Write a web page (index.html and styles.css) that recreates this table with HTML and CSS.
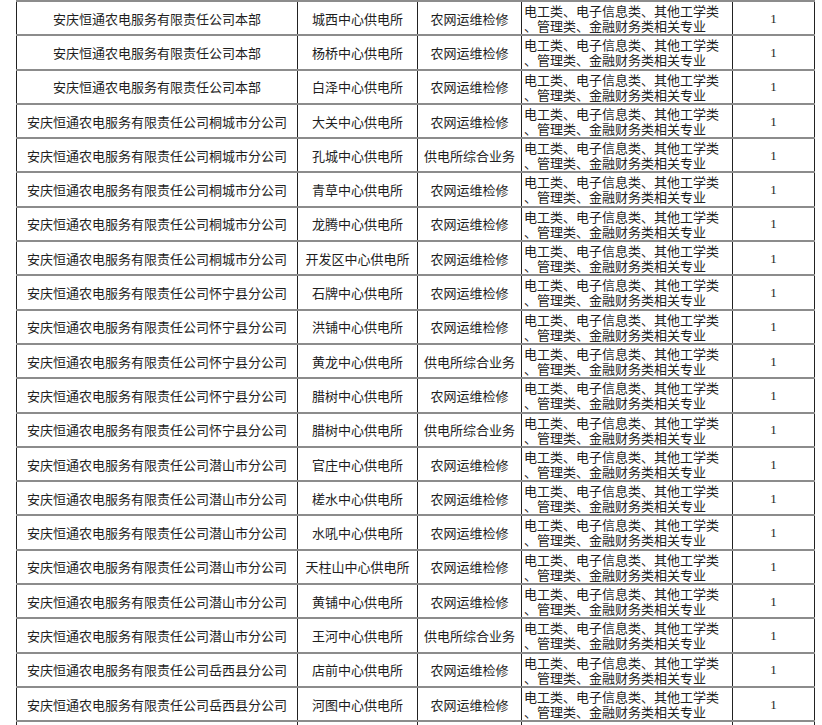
FILE: index.html
```html
<!DOCTYPE html>
<html lang="zh-CN">
<head>
<meta charset="utf-8">
<title>岗位表</title>
<link rel="stylesheet" href="styles.css">
</head>
<body>
<table class="grid">
<colgroup>
<col class="c1"><col class="c2"><col class="c3"><col class="c4"><col class="c5">
</colgroup>
<tbody>
<tr><td>安庆恒通农电服务有限责任公司本部</td><td>城西中心供电所</td><td>农网运维检修</td><td class="major">电工类、电子信息类、其他工学类<br>、管理类、金融财务类相关专业</td><td class="num">1</td></tr>
<tr><td>安庆恒通农电服务有限责任公司本部</td><td>杨桥中心供电所</td><td>农网运维检修</td><td class="major">电工类、电子信息类、其他工学类<br>、管理类、金融财务类相关专业</td><td class="num">1</td></tr>
<tr><td>安庆恒通农电服务有限责任公司本部</td><td>白泽中心供电所</td><td>农网运维检修</td><td class="major">电工类、电子信息类、其他工学类<br>、管理类、金融财务类相关专业</td><td class="num">1</td></tr>
<tr><td>安庆恒通农电服务有限责任公司桐城市分公司</td><td>大关中心供电所</td><td>农网运维检修</td><td class="major">电工类、电子信息类、其他工学类<br>、管理类、金融财务类相关专业</td><td class="num">1</td></tr>
<tr><td>安庆恒通农电服务有限责任公司桐城市分公司</td><td>孔城中心供电所</td><td>供电所综合业务</td><td class="major">电工类、电子信息类、其他工学类<br>、管理类、金融财务类相关专业</td><td class="num">1</td></tr>
<tr><td>安庆恒通农电服务有限责任公司桐城市分公司</td><td>青草中心供电所</td><td>农网运维检修</td><td class="major">电工类、电子信息类、其他工学类<br>、管理类、金融财务类相关专业</td><td class="num">1</td></tr>
<tr><td>安庆恒通农电服务有限责任公司桐城市分公司</td><td>龙腾中心供电所</td><td>农网运维检修</td><td class="major">电工类、电子信息类、其他工学类<br>、管理类、金融财务类相关专业</td><td class="num">1</td></tr>
<tr><td>安庆恒通农电服务有限责任公司桐城市分公司</td><td>开发区中心供电所</td><td>农网运维检修</td><td class="major">电工类、电子信息类、其他工学类<br>、管理类、金融财务类相关专业</td><td class="num">1</td></tr>
<tr><td>安庆恒通农电服务有限责任公司怀宁县分公司</td><td>石牌中心供电所</td><td>农网运维检修</td><td class="major">电工类、电子信息类、其他工学类<br>、管理类、金融财务类相关专业</td><td class="num">1</td></tr>
<tr><td>安庆恒通农电服务有限责任公司怀宁县分公司</td><td>洪铺中心供电所</td><td>农网运维检修</td><td class="major">电工类、电子信息类、其他工学类<br>、管理类、金融财务类相关专业</td><td class="num">1</td></tr>
<tr><td>安庆恒通农电服务有限责任公司怀宁县分公司</td><td>黄龙中心供电所</td><td>供电所综合业务</td><td class="major">电工类、电子信息类、其他工学类<br>、管理类、金融财务类相关专业</td><td class="num">1</td></tr>
<tr><td>安庆恒通农电服务有限责任公司怀宁县分公司</td><td>腊树中心供电所</td><td>农网运维检修</td><td class="major">电工类、电子信息类、其他工学类<br>、管理类、金融财务类相关专业</td><td class="num">1</td></tr>
<tr><td>安庆恒通农电服务有限责任公司怀宁县分公司</td><td>腊树中心供电所</td><td>供电所综合业务</td><td class="major">电工类、电子信息类、其他工学类<br>、管理类、金融财务类相关专业</td><td class="num">1</td></tr>
<tr><td>安庆恒通农电服务有限责任公司潜山市分公司</td><td>官庄中心供电所</td><td>农网运维检修</td><td class="major">电工类、电子信息类、其他工学类<br>、管理类、金融财务类相关专业</td><td class="num">1</td></tr>
<tr><td>安庆恒通农电服务有限责任公司潜山市分公司</td><td>槎水中心供电所</td><td>农网运维检修</td><td class="major">电工类、电子信息类、其他工学类<br>、管理类、金融财务类相关专业</td><td class="num">1</td></tr>
<tr><td>安庆恒通农电服务有限责任公司潜山市分公司</td><td>水吼中心供电所</td><td>农网运维检修</td><td class="major">电工类、电子信息类、其他工学类<br>、管理类、金融财务类相关专业</td><td class="num">1</td></tr>
<tr><td>安庆恒通农电服务有限责任公司潜山市分公司</td><td>天柱山中心供电所</td><td>农网运维检修</td><td class="major">电工类、电子信息类、其他工学类<br>、管理类、金融财务类相关专业</td><td class="num">1</td></tr>
<tr><td>安庆恒通农电服务有限责任公司潜山市分公司</td><td>黄铺中心供电所</td><td>农网运维检修</td><td class="major">电工类、电子信息类、其他工学类<br>、管理类、金融财务类相关专业</td><td class="num">1</td></tr>
<tr><td>安庆恒通农电服务有限责任公司潜山市分公司</td><td>王河中心供电所</td><td>供电所综合业务</td><td class="major">电工类、电子信息类、其他工学类<br>、管理类、金融财务类相关专业</td><td class="num">1</td></tr>
<tr><td>安庆恒通农电服务有限责任公司岳西县分公司</td><td>店前中心供电所</td><td>农网运维检修</td><td class="major">电工类、电子信息类、其他工学类<br>、管理类、金融财务类相关专业</td><td class="num">1</td></tr>
<tr><td>安庆恒通农电服务有限责任公司岳西县分公司</td><td>河图中心供电所</td><td>农网运维检修</td><td class="major">电工类、电子信息类、其他工学类<br>、管理类、金融财务类相关专业</td><td class="num">1</td></tr>
<tr class="tail"><td></td><td></td><td></td><td></td><td></td></tr>
</tbody>
</table>
</body>
</html>
```

FILE: styles.css
```css
html, body {
  margin: 0;
  padding: 0;
  background: #ffffff;
}

body {
  padding: 0 0 0 16px;
  font-family: "Noto Sans CJK SC", "Noto Sans", sans-serif;
  color: #1e1e1e;
}

.grid {
  border-collapse: collapse;
  table-layout: fixed;
  width: 798px;
  font-size: 13px;
}

.c1 { width: 281px; }
.c2 { width: 120px; }
.c3 { width: 104px; }
.c4 { width: 211px; }
.c5 { width: 82px; }

.grid td {
  height: 34.3px;
  box-sizing: border-box;
  padding: 0;
  text-align: center;
  vertical-align: middle;
  border-left: 1px solid #222;
  border-right: 1px solid #222;
  border-top: 2px solid #8c8c8c;
  border-bottom: 2px solid #8c8c8c;
  line-height: 15px;
  white-space: nowrap;
  overflow: hidden;
}

.grid td.major {
  text-align: left;
  vertical-align: top;
  padding: 1px 0 0 2px;
  line-height: 15px;
}

.grid td.num {
  font-family: "Liberation Serif", "Noto Sans CJK SC", serif;
  font-size: 13px;
}
```
